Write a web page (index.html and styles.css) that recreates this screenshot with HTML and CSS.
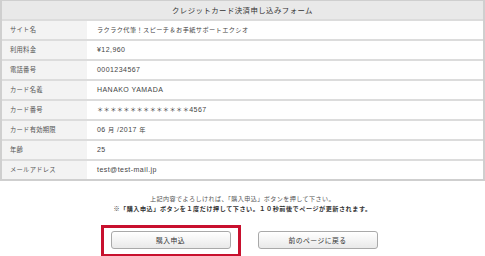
FILE: index.html
```html
<!DOCTYPE html>
<html lang="ja">
<head>
<meta charset="utf-8">
<title>クレジットカード決済申し込みフォーム</title>
<link rel="stylesheet" href="styles.css">
</head>
<body>
<div class="form">
  <div class="head">クレジットカード決済申し込みフォーム</div>
  <div class="row"><div class="label">サイト名</div><div class="value"><span class="ja">ラクラク代筆！スピーチ＆お手紙サポートエクシオ</span></div></div>
  <div class="row"><div class="label">利用料金</div><div class="value">¥12,960</div></div>
  <div class="row"><div class="label">電話番号</div><div class="value">0001234567</div></div>
  <div class="row"><div class="label">カード名義</div><div class="value">HANAKO YAMADA</div></div>
  <div class="row"><div class="label">カード番号</div><div class="value"><span class="ja">＊＊＊＊＊＊＊＊＊＊＊＊＊＊</span>4567</div></div>
  <div class="row"><div class="label">カード有効期限</div><div class="value">06 <span class="ja">月</span> /2017 <span class="ja">年</span></div></div>
  <div class="row"><div class="label">年齢</div><div class="value">25</div></div>
  <div class="row"><div class="label">メールアドレス</div><div class="value">test@test-mail.jp</div></div>
</div>
<div class="notes">
  <p>上記内容でよろしければ、「購入申込」ボタンを押して下さい。</p>
  <p class="strong">※「購入申込」ボタンを１度だけ押して下さい。１０秒前後でページが更新されます。</p>
</div>
<div class="actions">
  <div class="focus"><button class="btn" type="button">購入申込</button></div>
  <button class="btn" type="button">前のページに戻る</button>
</div>
</body>
</html>
```
FILE: styles.css
```css
html, body {
  margin: 0;
  padding: 0;
  background: #fff;
}
body {
  font-family: "Liberation Sans", "Noto Sans CJK JP", sans-serif;
  color: #444;
  width: 485px;
  overflow: hidden;
}
.form {
  border: 2px solid #cfcfcf;
  border-top-width: 1px;
  border-bottom-width: 2px;
}
.head {
  height: 18px;
  line-height: 18px;
  background: #e9e9e9;
  text-align: center;
  font-family: "Noto Sans CJK JP", sans-serif;
  font-size: 7.4px;
  letter-spacing: 0.45px;
  color: #333;
}
.row {
  display: flex;
  height: 18px;
  border-top: 2px solid #dcdcdc;
}
.label {
  width: 77px;
  flex: none;
  padding-left: 8px;
  background: #f3f3f3;
  line-height: 18px;
  font-family: "Noto Sans CJK JP", sans-serif;
  font-size: 6.3px;
  letter-spacing: 0.25px;
  color: #555;
}
.value {
  flex: 1;
  padding-left: 10px;
  line-height: 18px;
  font-size: 7px;
  letter-spacing: 0.45px;
  color: #444;
}
.ja {
  font-family: "Noto Sans CJK JP", sans-serif;
  font-size: 6.2px;
  letter-spacing: 0.4px;
}
.notes {
  margin-top: 13px;
  text-align: center;
  font-family: "Noto Sans CJK JP", sans-serif;
  font-size: 6.1px;
  letter-spacing: 0.4px;
  color: #555;
}
.notes p {
  margin: 0;
  line-height: 10px;
}
.notes .strong {
  font-weight: bold;
  color: #333;
  letter-spacing: 0.55px;
}
.actions {
  display: flex;
  justify-content: center;
  align-items: flex-start;
  gap: 17px;
  margin-top: 11px;
  padding-right: 7px;
}
.focus {
  border: 3px solid #c8102e;
  padding: 3px 7px 5px;
}
.btn {
  display: block;
  box-sizing: border-box;
  width: 120px;
  height: 18px;
  margin: 0;
  padding: 0;
  border: 1px solid #a9a9a9;
  border-radius: 3px;
  background: linear-gradient(#ffffff, #e9e9e9);
  font-family: "Noto Sans CJK JP", sans-serif;
  font-size: 6.8px;
  letter-spacing: 0.5px;
  color: #333;
  line-height: 16px;
}
.actions > .btn {
  margin-top: 6px;
}
```
